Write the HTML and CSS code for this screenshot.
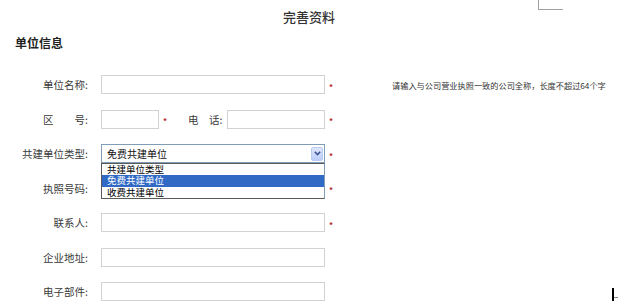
FILE: index.html
```html
<!DOCTYPE html>
<html lang="zh-CN">
<head>
<meta charset="utf-8">
<title>完善资料</title>
<link rel="stylesheet" href="styles.css">
</head>
<body>
<div class="page">
  <div class="corner-mark"></div>
  <h1 class="title">完善资料</h1>
  <h2 class="section">单位信息</h2>
  <div class="form">
    <div class="row">
      <span class="lbl">单位名称:</span>
      <span class="inp w224"></span>
      <span class="req">*</span>
      <span class="hint">请输入与公司营业执照一致的公司全称，长度不超过64个字</span>
    </div>
    <div class="row">
      <span class="lbl">区　　号:</span>
      <span class="inp w58"></span>
      <span class="req">*</span>
      <span class="lbl2">电　话:</span>
      <span class="inp w98"></span>
      <span class="req">*</span>
    </div>
    <div class="row">
      <span class="lbl">共建单位类型:</span>
      <div class="select">
        <span class="sel-text">免费共建单位</span>
        <span class="sel-btn">
          <svg width="7" height="5" viewBox="0 0 7 5"><polyline points="0.8,0.8 3.5,3.6 6.2,0.8" fill="none" stroke="#3a4f8f" stroke-width="1.5"/></svg>
        </span>
        <ul class="sel-list">
          <li>共建单位类型</li>
          <li class="on">免费共建单位</li>
          <li>收费共建单位</li>
        </ul>
      </div>
      <span class="req">*</span>
    </div>
    <div class="row">
      <span class="lbl">执照号码:</span>
      <span class="inp w224"></span>
      <span class="req">*</span>
    </div>
    <div class="row">
      <span class="lbl">联系人:</span>
      <span class="inp w224"></span>
      <span class="req">*</span>
    </div>
    <div class="row">
      <span class="lbl">企业地址:</span>
      <span class="inp w224"></span>
    </div>
    <div class="row">
      <span class="lbl">电子部件:</span>
      <span class="inp w224"></span>
    </div>
  </div>
  <div class="caret"><span class="caret-bar"></span><span class="caret-arrow"></span></div>
</div>
</body>
</html>
```
FILE: styles.css
```css
html, body {
  margin: 0;
  padding: 0;
  background: #fff;
}
body {
  font-family: "Noto Sans CJK SC", "Noto Sans", sans-serif;
  color: #333;
}
.page {
  position: relative;
  width: 618px;
  height: 308px;
  overflow: hidden;
}
.corner-mark {
  position: absolute;
  left: 538px;
  top: 0;
  width: 24px;
  height: 9px;
  border-left: 1px solid #a0a0a0;
  border-bottom: 1px solid #a0a0a0;
}
.title {
  margin: 0;
  padding-top: 8px;
  font-size: 13px;
  line-height: 18px;
  font-weight: 500;
  text-align: center;
  color: #333;
}
.section {
  margin: 9px 0 0 15px;
  font-size: 12px;
  line-height: 16px;
  font-weight: bold;
  color: #222;
}
.form {
  margin-top: 24px;
}
.row {
  display: flex;
  align-items: center;
  height: 19px;
  margin-bottom: 15.5px;
}
.lbl {
  width: 88px;
  margin-right: 13px;
  text-align: right;
  font-size: 10.5px;
  color: #3a3a3a;
  white-space: nowrap;
}
.lbl2 {
  width: 39px;
  margin-left: 17px;
  font-size: 10.5px;
  color: #3a3a3a;
  white-space: nowrap;
}
.inp {
  display: block;
  height: 19px;
  box-sizing: border-box;
  border: 1px solid #d2d2d2;
  background: #fff;
}
.w224 { width: 224px; }
.w58 { width: 58px; }
.w98 { width: 98px; }
.req {
  width: 12px;
  box-sizing: border-box;
  padding-left: 4px;
  font-size: 8px;
  font-weight: bold;
  line-height: 8px;
  color: #b51f2c;
  transform: translateY(2px);
}
.hint {
  margin-left: 55px;
  font-size: 8.2px;
  color: #333;
  white-space: nowrap;
}
.select {
  position: relative;
  display: flex;
  align-items: center;
  width: 224px;
  height: 19px;
  box-sizing: border-box;
  border: 1px solid #7f9db9;
  background: #fff;
}
.sel-text {
  flex: 1;
  padding-left: 5px;
  font-size: 10px;
  color: #111;
}
.sel-btn {
  display: flex;
  align-items: center;
  justify-content: center;
  width: 12px;
  height: 14px;
  margin-right: 1px;
  box-sizing: border-box;
  border: 1px solid #b9c9ef;
  border-radius: 2px;
  background: linear-gradient(#dfe7fc, #bccdf8);
}
.sel-list {
  position: absolute;
  z-index: 2;
  left: -1px;
  top: 18px;
  width: 224px;
  box-sizing: border-box;
  margin: 0;
  padding: 0;
  list-style: none;
  border: 1px solid #5a5a5a;
  border-right-color: #7f9db9;
  background: #fff;
}
.sel-list li {
  height: 11.3px;
  line-height: 11.3px;
  padding-left: 5px;
  font-size: 9.5px;
  color: #000;
}
.sel-list li.on {
  background: #316ac5;
  color: #fff;
}
.caret {
  position: absolute;
  left: 612px;
  top: 288px;
  width: 6px;
  height: 13px;
}
.caret-bar {
  position: absolute;
  left: 0;
  top: 0;
  width: 1.5px;
  height: 13px;
  background: #000;
}
.caret-arrow {
  position: absolute;
  left: 2px;
  top: 8.5px;
  width: 4px;
  height: 1px;
  background: #888;
}
```
